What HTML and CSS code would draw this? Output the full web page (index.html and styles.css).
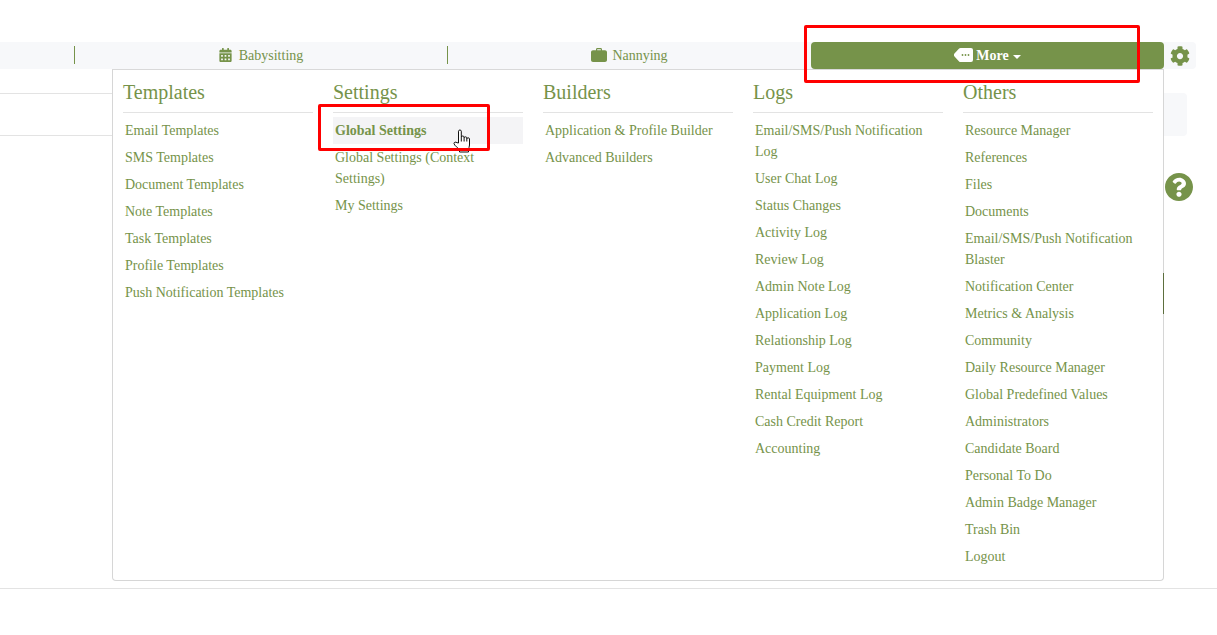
FILE: index.html
```html
<!DOCTYPE html>
<html lang="en">
<head>
<meta charset="utf-8">
<title>Global Settings</title>
<link rel="stylesheet" href="styles.css">
</head>
<body>
<div class="page">
  <nav class="tabbar">
    <div class="tab-start"></div>
    <div class="tab tab-babysitting">
      <svg class="tab-icon cal" viewBox="0 0 448 512"><path d="M0 464c0 26.5 21.5 48 48 48h352c26.5 0 48-21.5 48-48V192H0v272zm320-196c0-6.6 5.4-12 12-12h40c6.6 0 12 5.4 12 12v40c0 6.6-5.4 12-12 12h-40c-6.6 0-12-5.4-12-12v-40zm0 128c0-6.6 5.4-12 12-12h40c6.6 0 12 5.4 12 12v40c0 6.6-5.4 12-12 12h-40c-6.6 0-12-5.4-12-12v-40zM192 268c0-6.6 5.4-12 12-12h40c6.6 0 12 5.4 12 12v40c0 6.6-5.4 12-12 12h-40c-6.6 0-12-5.4-12-12v-40zm0 128c0-6.6 5.4-12 12-12h40c6.6 0 12 5.4 12 12v40c0 6.6-5.4 12-12 12h-40c-6.6 0-12-5.4-12-12v-40zM64 268c0-6.6 5.4-12 12-12h40c6.6 0 12 5.4 12 12v40c0 6.6-5.4 12-12 12H76c-6.6 0-12-5.4-12-12v-40zm0 128c0-6.6 5.4-12 12-12h40c6.6 0 12 5.4 12 12v40c0 6.6-5.4 12-12 12H76c-6.6 0-12-5.4-12-12v-40zM400 64h-48V16c0-8.8-7.2-16-16-16h-32c-8.8 0-16 7.2-16 16v48H160V16c0-8.8-7.2-16-16-16h-32c-8.8 0-16 7.2-16 16v48H48C21.5 64 0 85.5 0 112v48h448v-48c0-26.5-21.5-48-48-48z"/></svg>
      <span>Babysitting</span>
    </div>
    <div class="tab tab-nannying">
      <svg class="tab-icon case" viewBox="0 0 16 14"><path d="M5 2.2V1.4C5 .6 5.6 0 6.4 0h3.2C10.400 0 11 .6 11 1.400v.8h3c1.100 0 2 .9 2 2V12c0 1.100-.9 2-2 2H2c-1.100 0-2-.9-2-2V4.200c0-1.100.9-2 2-2h3zm1.200 0h3.600v-1H6.200v1z"/></svg>
      <span>Nannying</span>
    </div>
    <button class="more-btn" type="button">
      <svg class="more-icon" viewBox="0 0 19 14"><path class="more-tag" d="M6.500 0H17a2 2 0 0 1 2 2v10a2 2 0 0 1-2 2H6.500a2 2 0 0 1-1.400-.6L.5 8.400a2 2 0 0 1 0-2.800l4.600-5A2 2 0 0 1 6.500 0z"/><circle class="more-dot" cx="8.500" cy="7" r=".9"/><circle class="more-dot" cx="11.500" cy="7" r=".9"/><circle class="more-dot" cx="14.500" cy="7" r=".9"/></svg>
      <span>More</span>
      <i class="caret"></i>
    </button>
    <div class="gear-cell">
      <svg class="gear" viewBox="0 0 512 512"><path d="M487.400 315.700l-42.600-24.600c4.300-23.200 4.300-47 0-70.200l42.600-24.600c4.900-2.800 7.100-8.600 5.500-14-11.100-35.600-30-67.800-54.700-94.600-3.800-4.100-10-5.100-14.800-2.300L380.800 110c-17.900-15.400-38.500-27.300-60.800-35.100V25.800c0-5.600-3.900-10.500-9.400-11.700-36.700-8.200-74.300-7.800-109.200 0-5.500 1.200-9.400 6.100-9.400 11.700V75c-22.200 7.900-42.800 19.800-60.800 35.100L88.700 85.500c-4.900-2.800-11-1.900-14.800 2.300-24.700 26.700-43.600 58.900-54.700 94.600-1.700 5.400.6 11.200 5.500 14L67.300 221c-4.300 23.200-4.300 47 0 70.200l-42.600 24.600c-4.900 2.800-7.100 8.600-5.500 14 11.100 35.600 30 67.800 54.700 94.600 3.800 4.100 10 5.100 14.800 2.300l42.600-24.600c17.900 15.400 38.500 27.300 60.800 35.100v49.200c0 5.600 3.900 10.500 9.400 11.700 36.700 8.200 74.300 7.800 109.200 0 5.500-1.200 9.400-6.100 9.400-11.700v-49.200c22.200-7.900 42.800-19.800 60.800-35.100l42.600 24.600c4.900 2.800 11 1.900 14.800-2.300 24.700-26.700 43.600-58.900 54.700-94.600 1.500-5.500-.7-11.300-5.600-14.100zM256 336c-44.100 0-80-35.900-80-80s35.900-80 80-80 80 35.900 80 80-35.900 80-80 80z"/></svg>
    </div>
  </nav>

  <section class="content-row">
    <div class="content-main"></div>
    <div class="content-side"></div>
  </section>

  <div class="help-row">
    <svg class="help" viewBox="8 8 496 496"><path d="M504 256c0 136.997-111.043 248-248 248S8 392.997 8 256C8 119.083 119.043 8 256 8s248 111.083 248 248zM262.655 90c-54.497 0-89.255 22.957-116.549 63.758-3.536 5.286-2.353 12.415 2.715 16.258l34.699 26.310c5.205 3.947 12.621 3.008 16.665-2.122 17.864-22.658 30.113-35.797 57.303-35.797 20.429 0 45.698 13.148 45.698 32.958 0 14.976-12.363 22.667-32.534 33.976C247.128 238.528 216 254.941 216 296v4c0 6.627 5.373 12 12 12h56c6.627 0 12-5.373 12-12v-1.333c0-28.462 83.186-29.647 83.186-106.667 0-58.002-60.165-102-116.531-102zM256 338c-25.365 0-46 20.635-46 46 0 25.364 20.635 46 46 46s46-20.636 46-46c0-25.365-20.635-46-46-46z"/></svg>
  </div>

  <div class="footer-line"></div>

  <div class="menu">
    <span class="menu-edge"></span>
    <div class="menu-col">
      <h4>Templates</h4>
      <ul>
        <li>Email Templates</li>
        <li>SMS Templates</li>
        <li>Document Templates</li>
        <li>Note Templates</li>
        <li>Task Templates</li>
        <li>Profile Templates</li>
        <li>Push Notification Templates</li>
      </ul>
    </div>
    <div class="menu-col">
      <h4>Settings</h4>
      <ul>
        <li class="active">Global Settings</li>
        <li>Global Settings (Context Settings)</li>
        <li>My Settings</li>
      </ul>
    </div>
    <div class="menu-col">
      <h4>Builders</h4>
      <ul>
        <li>Application &amp; Profile Builder</li>
        <li>Advanced Builders</li>
      </ul>
    </div>
    <div class="menu-col">
      <h4>Logs</h4>
      <ul>
        <li>Email/SMS/Push Notification Log</li>
        <li>User Chat Log</li>
        <li>Status Changes</li>
        <li>Activity Log</li>
        <li>Review Log</li>
        <li>Admin Note Log</li>
        <li>Application Log</li>
        <li>Relationship Log</li>
        <li>Payment Log</li>
        <li>Rental Equipment Log</li>
        <li>Cash Credit Report</li>
        <li>Accounting</li>
      </ul>
    </div>
    <div class="menu-col">
      <h4>Others</h4>
      <ul>
        <li>Resource Manager</li>
        <li>References</li>
        <li>Files</li>
        <li>Documents</li>
        <li>Email/SMS/Push Notification Blaster</li>
        <li>Notification Center</li>
        <li>Metrics &amp; Analysis</li>
        <li>Community</li>
        <li>Daily Resource Manager</li>
        <li>Global Predefined Values</li>
        <li>Administrators</li>
        <li>Candidate Board</li>
        <li>Personal To Do</li>
        <li>Admin Badge Manager</li>
        <li>Trash Bin</li>
        <li>Logout</li>
      </ul>
    </div>
  </div>

  <svg class="pointer" viewBox="0 0 18 24"><path d="M5.500 14V2.200c0-1.600 2.800-1.600 2.800 0V8c0-1.300 2.800-1.300 2.800 0v.8c0-1.300 2.700-1.300 2.700 0v1c0-1.300 2.700-1.300 2.700 0v6.200c0 2-1 3-1 5v2H6.500v-2c-1-2-5.500-4.500-5.500-6.500 0-1.500 1.800-1.800 3-.8z"/><path d="M8.300 8v4.500M11.100 8.800v3.700M13.800 9.800v2.700"/></svg>

  <div class="note note-more"></div>
  <div class="note note-settings"></div>
</div>
</body>
</html>
```
FILE: styles.css
```css
* { box-sizing: border-box; }

html, body {
  margin: 0;
  height: 100%;
  overflow: hidden;
  background: #fff;
}

.page {
  position: relative;
  width: 1217px;
  height: 635px;
  padding-top: 42px;
  font-family: "Liberation Serif", "Times New Roman", serif;
  font-size: 14px;
  color: #76934a;
}

.tabbar {
  display: flex;
  width: 1196px;
  height: 27px;
  background: #f7f8fa;
  border-radius: 0 4px 4px 0;
}

.tab-start { width: 74px; }

.tab {
  display: flex;
  align-items: center;
  justify-content: center;
  position: relative;
  border-left: 1px solid #76934a;
  height: 18px;
  margin-top: 4px;
  padding-top: 1px;
}

.tab-babysitting { width: 373px; gap: 7px; }
.tab-nannying { width: 364px; gap: 5px; }

.tab-icon { fill: #76934a; display: block; }
.cal { width: 13px; height: 14px; margin-top: -2px; }
.case { width: 16px; height: 14px; margin-top: -2px; }

.more-btn {
  display: flex;
  align-items: center;
  justify-content: center;
  gap: 3px;
  width: 353px;
  height: 27px;
  padding: 0;
  border: 0;
  border-radius: 4px;
  background: #76934a;
  color: #fff;
  font: bold 14px "Liberation Serif", "Times New Roman", serif;
}

.more-icon { width: 19px; height: 14px; margin-top: -2px; }
.more-tag { fill: #fff; }
.more-dot { fill: #76934a; }

.caret {
  width: 0;
  height: 0;
  margin-left: 1px;
  margin-top: 2px;
  border-left: 4px solid transparent;
  border-right: 4px solid transparent;
  border-top: 4px solid #fff;
}

.gear-cell {
  flex: 1;
  display: flex;
  align-items: center;
  padding-left: 6px;
}

.gear { width: 20px; height: 20px; margin-top: 1px; fill: #76934a; }

.content-row {
  display: flex;
  width: 1187px;
  height: 43px;
  margin-top: 24px;
}

.content-main {
  flex: 1;
  border-top: 1px solid #e3e3e3;
  border-bottom: 1px solid #e3e3e3;
}

.content-side {
  width: 23px;
  background: #f7f8fa;
  border-radius: 0 4px 4px 0;
}

.help-row {
  height: 28px;
  margin-top: 37px;
  padding-left: 1165px;
}

.help { display: block; width: 28px; height: 28px; fill: #76934a; }

.footer-line {
  margin-top: 387px;
  border-top: 1px solid #e3e3e3;
}

.menu {
  position: absolute;
  left: 112px;
  top: 69px;
  width: 1052px;
  height: 512px;
  display: grid;
  grid-template-columns: repeat(5, 210px);
  padding-left: 10px;
  background: #fff;
  border: 1px solid #d6d6d6;
  border-top-color: #d9d9d9;
  border-radius: 0 0 4px 4px;
}

.menu-edge {
  position: absolute;
  right: -1px;
  top: 203px;
  width: 1px;
  height: 41px;
  background: #5d6f3e;
}

.menu-col { width: 190px; }

.menu-col h4 {
  margin: 11px 0 0;
  padding-bottom: 8px;
  height: 32px;
  border-bottom: 1px solid #e3e3e3;
  font-size: 20px;
  font-weight: normal;
  line-height: 23px;
}

.menu-col ul {
  list-style: none;
  margin: 0;
  padding: 4px 0 0;
}

.menu-col li {
  padding: 3px 2px;
  line-height: 21px;
}

.menu-col li.active {
  background: #f4f4f6;
  font-weight: bold;
}

.note {
  position: absolute;
  border: 3px solid #ff0000;
  border-radius: 2px;
}

.note-more { left: 804px; top: 25px; width: 336px; height: 58px; }
.note-settings { left: 318px; top: 104px; width: 172px; height: 47px; }

.pointer {
  position: absolute;
  left: 453px;
  top: 129px;
  width: 18px;
  height: 24px;
  fill: #fff;
  stroke: #111;
  stroke-width: 1;
}
```
